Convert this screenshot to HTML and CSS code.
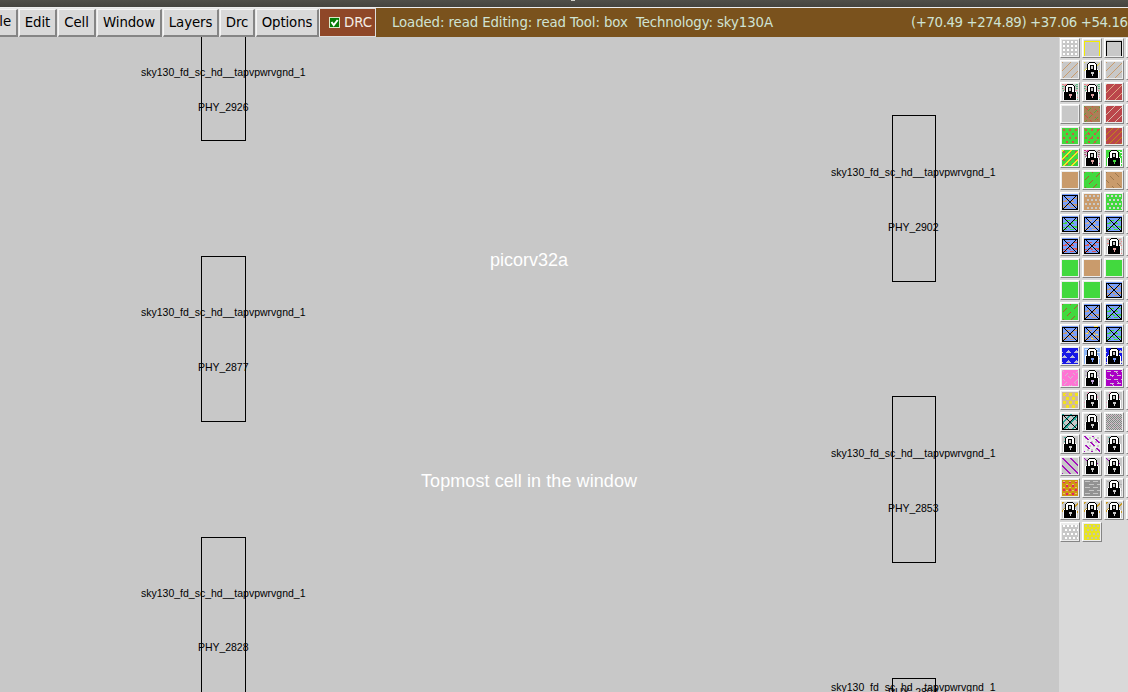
FILE: index.html
```html
<!DOCTYPE html>
<html lang="en">
<head>
<meta charset="utf-8">
<title>picorv32a</title>
<link rel="stylesheet" href="styles.css">
</head>
<body>
<div class="window">
  <div class="titlebar"><span class="title-mark"></span></div>
  <header class="toolbar">
    <nav class="menu">
      <button class="menu-item file"><span>File</span></button>
      <button class="menu-item edit">Edit</button>
      <button class="menu-item cell">Cell</button>
      <button class="menu-item win">Window</button>
      <button class="menu-item layers">Layers</button>
      <button class="menu-item drc">Drc</button>
      <button class="menu-item options">Options</button>
    </nav>
    <div class="drc-toggle">
      <svg class="check" viewBox="0 0 11 11"><rect x=".5" y=".5" width="10" height="10" fill="#067c06" stroke="#d8e8c8"/><path d="M2.5 5l2.2 3L8.7 3" fill="none" stroke="#fff" stroke-width="2"/></svg>
      <span>DRC</span>
    </div>
    <div class="status">
      <svg class="status-svg" width="752" height="29"><text x="16" y="19" textLength="381" xml:space="preserve">Loaded: read Editing: read Tool: box  Technology: sky130A</text><text x="535" y="19" textLength="217">(+70.49 +274.89) +37.06 +54.16</text></svg>
    </div>
  </header>
  <main class="workspace">
    <svg class="layout" width="1059" height="655" viewBox="0 37 1059 655">
      <g class="outline">
        <rect x="201.5" y="20.5" width="44" height="120"/>
        <rect x="201.5" y="256.5" width="44" height="165"/>
        <rect x="201.5" y="537.5" width="44" height="170"/>
        <rect x="892.5" y="115.5" width="43" height="166"/>
        <rect x="892.5" y="396.5" width="43" height="166"/>
        <rect x="892.5" y="678.5" width="43" height="166"/>
      </g>
      <g class="label">
        <text x="141" y="76" textLength="164.5">sky130_fd_sc_hd__tapvpwrvgnd_1</text>
        <text x="198" y="111" textLength="50.5">PHY_2926</text>
        <text x="141" y="316" textLength="164.5">sky130_fd_sc_hd__tapvpwrvgnd_1</text>
        <text x="198" y="371" textLength="50.5">PHY_2877</text>
        <text x="141" y="597" textLength="164.5">sky130_fd_sc_hd__tapvpwrvgnd_1</text>
        <text x="198" y="651" textLength="50.5">PHY_2828</text>
        <text x="831" y="176" textLength="164.5">sky130_fd_sc_hd__tapvpwrvgnd_1</text>
        <text x="888" y="231" textLength="50.5">PHY_2902</text>
        <text x="831" y="457" textLength="164.5">sky130_fd_sc_hd__tapvpwrvgnd_1</text>
        <text x="888" y="512" textLength="50.5">PHY_2853</text>
        <text x="831" y="691" textLength="164.5">sky130_fd_sc_hd__tapvpwrvgnd_1</text>
        <text x="888" y="696" textLength="50.5">PHY_2804</text>
      </g>
      <g class="caption">
        <text x="490" y="266" textLength="78">picorv32a</text>
        <text x="421" y="487" textLength="216">Topmost cell in the window</text>
      </g>
    </svg>
    <aside class="palette" id="palette"></aside>
  </main>
</div>
<script src="palette.js"></script>
</body>
</html>
```
FILE: styles.css
```css
* { box-sizing: border-box; }
body { margin: 0; overflow: hidden; background: #c8c8c8; font-family: "DejaVu Sans", sans-serif; }
.window { display: flex; flex-direction: column; width: 1128px; height: 692px; overflow: hidden; }
.titlebar { height: 7px; flex: none; background: linear-gradient(#504f49, #45443f); display: flex; padding-left: 571px; }
.title-mark { width: 4px; height: 1px; background: #d0cfc8; }
.toolbar { height: 30px; flex: none; display: flex; background: #d9d9d9; border-top: 1px solid #eee; }
.menu { display: flex; gap: 1px; padding-top: 1px; background: #e6e6e6; }
.menu-item { height: 28px; margin: 0; padding: 0; border: 1px solid #f5f5f5; border-right: 2px solid #858585; border-bottom: 2px solid #858585; border-radius: 0; background: #d9d9d9; color: #000; font: 13.33px/23px "DejaVu Sans", sans-serif; letter-spacing: -0.1px; white-space: nowrap; text-align: center; }
.file { width: 18px; border-left: 0; padding-right: 5px; overflow: hidden; display: flex; justify-content: flex-end; }
.edit { width: 38px; }
.cell { width: 38px; }
.win { width: 65px; }
.layers { width: 56px; }
.drc { width: 35px; }
.options { width: 63px; }
.drc-toggle { width: 57px; margin-top: 1px; height: 28px; display: flex; align-items: center; gap: 4px; padding: 0 0 0 9px; border-left: 1px solid #eee; border-right: 1px solid #ddd; border-bottom: 1px solid #ddd; background: #8f4728; color: #f4eee6; font-size: 13.33px; letter-spacing: -0.1px; }
.check { width: 11px; height: 11px; flex: none; }
.status { flex: 1; background: #7a521d; }
.status-svg { display: block; font-size: 13.33px; fill: #cfe3d4; }
.workspace { flex: 1; display: flex; min-height: 0; }
.layout { display: block; flex: none; background: #c8c8c8; }
.outline { fill: none; stroke: #000; shape-rendering: crispEdges; }
.label { font: 10.5px "Liberation Sans", Arial, sans-serif; fill: #000; }
.caption { font: 18px "Liberation Sans", Arial, sans-serif; fill: #fff; }
.palette { flex: none; width: 69px; overflow: hidden; background: #d9d9d9; padding: 1px 0 0 1px; display: grid; grid-template-columns: repeat(4, 20px); grid-auto-rows: 20px; gap: 2px; align-content: start; }
.swatch { border: 1px solid #fff; border-right-color: #858585; border-bottom-color: #858585; padding: 1px; background: #ececec; }
.swatch svg { display: block; width: 16px; height: 16px; overflow: hidden; background: #c8c8c8; shape-rendering: crispEdges; }
```
FILE: palette.js
```js
const G = '#42d93e', T = '#c99b6c', R = '#bb464b', B = '#799ffb', N = '#c8c8c8';
const rect = (x, y, w, h, c) => `<rect x="${x}" y="${y}" width="${w}" height="${h}" fill="${c}"/>`;
const fill = c => rect(0, 0, 16, 16, c);
const frame = c => rect(0, 1, 16, 1, c) + rect(0, 1, 1, 15, c) + rect(15, 1, 1, 15, c);

// Rows of small blocks, optionally shifted on alternate rows.
function dots(c, px, py, w, h, shift) {
  let s = '';
  for (let y = 1, r = 0; y < 16; y += py, r++)
    for (let x = 1 + (r % 2) * shift; x < 16; x += px) s += rect(x, y, Math.min(w, 16 - x), Math.min(h, 16 - y), c);
  return s;
}
// Pixel-stepped diagonals; dir 1 rises to the right.
function diag(c, step, dir = 1, w = 1, on = 16, off = 0) {
  let s = '';
  for (let y = 0; y < 16; y++)
    for (let x = 0; x < 16; x++) {
      const k = dir > 0 ? x + y : x - y + 64;
      if (k % step < w && (y + Math.floor(k / step) * 3) % (on + off) < on) s += rect(x, y, 1, 1, c);
    }
  return s;
}
function specks(c, n, seed) {
  let s = '', v = seed;
  for (let i = 0; i < n; i++) {
    v = (v * 73 + 41) % 257;
    s += rect(v % 16, (v * 7 >> 3) % 16, 1 + i % 2, 1, c);
  }
  return s;
}
const cross = () => {
  let s = frame('#000') + rect(0, 15, 16, 1, '#000');
  for (let i = 1; i < 15; i++) s += rect(i, i, 1, 1, '#000') + rect(15 - i, i, 1, 1, '#000');
  return s;
};
const lock = (hole = '#ccc') =>
  rect(5, 0, 6, 1, '#000') + rect(4, 1, 8, 1, '#000') + rect(3, 2, 10, 7, '#000') +
  rect(5, 1, 6, 1, '#fff') + rect(4, 2, 8, 6, '#fff') +
  rect(6, 3, 4, 1, '#000') + rect(6, 4, 4, 4, '#000') + rect(7, 4, 2, 3, N) +
  rect(2, 8, 12, 8, '#000') + rect(1, 8, 1, 8, '#fff') + rect(14, 8, 1, 8, '#fff') +
  rect(2, 7, 1, 1, '#fff') + rect(13, 7, 1, 1, '#fff') + rect(7, 10, 3, 2, hole) + rect(8, 12, 1, 2, hole);
const contact = (c, d = '') => fill(B) + dots(c, 7, 3, 4, 1, 3) + dots(c, 6, 5, 2, 1, 2) + d + cross();
const locked = (a, b, hole) => specks(a, 34, 7) + (b ? specks(b, 28, 90) : '') + lock(hole);
const lines = (c, b) => fill(b) + dots(c, 8, 3, 5, 1, 4);
// Interlocking triangles on a two-row repeat.
const triangles = (c) => {
  let s = '';
  for (const [y, off] of [[3, 0], [8, 4], [13, 0]])
    for (let x = off - 4; x < 16; x += 8) s += rect(x + 2, y - 1, 1, 1, c) + rect(x + 1, y, 3, 1, c) + rect(x, y + 1, 5, 1, c);
  return s;
};

const icons = [
  dots('#fff', 4, 4, 2, 2, 0), frame('#f3ed00'), frame('#000'),
  diag(T, 8), diag('#e4d83f', 8) + lock(), diag(T, 8),
  locked('#e88888', '#57b77c', '#dba0a0'), locked('#e88888', '#57b77c', '#dba0a0'), fill(R) + diag('#dfaa83', 8),
  '', fill('#aa8057') + diag('#d74742', 8, -1, 1, 3, 2) + diag('#58a43d', 8, 1, 1, 3, 2), fill(R) + diag('#d9bbac', 8),
  fill(G) + dots('#c65d46', 6, 4, 2, 2, 3), fill(G) + dots('#c65d46', 6, 4, 2, 2, 3) + diag('#c65d46', 8, 1, 1, 4, 3), fill(R) + diag('#c18a16', 6),
  fill(G) + dots('#c65d46', 6, 4, 2, 2, 3) + diag('#f2ea26', 8, 1, 2), locked('#cf338f', '#977', '#dba0a0'), fill(G) + specks('#fff', 18, 22) + lock(G),
  fill(T), fill(G) + diag('#af5436', 8, 1, 1, 4, 3), fill(T) + diag('#9e794f', 8, -1, 1, 4, 3),
  contact(T), fill(T) + dots(N, 4, 4, 2, 2, 2), fill(G) + dots('#d4d4d4', 4, 4, 2, 2, 2),
  contact(G), contact('#d3b08c'), contact(G),
  contact('#df5550'), contact('#df5550'), dots('#e88', 4, 2, 2, 1, 2) + lock('#e5a4a4'),
  fill(G), fill(T), fill(G),
  fill(G), fill(G), contact(T),
  fill(G) + diag('#af5436', 8, 1, 1, 4, 3), contact(T), contact(G),
  contact(T), contact(T, specks('#ffe34b', 12, 32)), contact(G),
  fill('#1717e5') + triangles('#b9b9d9'), lines('#dce8f8', '#8bb5f6') + lock(B), fill('#1717e5') + triangles(N) + lock(B),
  fill('#ff74d4') + diag('#d2bdcc', 8, 1, 1, 3, 3) + diag('#d2bdcc', 8, -1, 1, 2, 4), dots('#b5a1c9', 4, 2, 2, 1, 2) + lock('#c5a8dd'), fill('#ab00c5') + dots('#d1bfd5', 7, 4, 4, 1, 3) + diag('#d1bfd5', 8, -1, 1, 3, 4),
  fill('#d1ba9c') + dots('#f2e31d', 6, 4, 3, 3, 3) + specks('#f29bbb', 14, 3), specks('#e896b8', 22, 12) + lock(), specks('#e896b8', 22, 12) + lock(),
  diag('#25a395', 8, 1, 2) + diag('#25a395', 8, -1, 1) + cross(), specks('#b3b3b3', 22, 12) + lock(), diag('#858585', 2) + dots('#b78ca3', 4, 4, 1, 1, 2),
  specks('#45ad9b', 12, 20) + lock(), fill('#eee') + dots(N, 4, 4, 2, 2, 2) + diag('#a310bb', 8, -1, 2, 4, 2), specks('#70b8ac', 12, 20) + lock(),
  diag('#a310bb', 8, -1, 2), diag('#a310bb', 8, -1, 1, 3, 3) + lock(), diag('#a310bb', 8, -1, 1, 3, 3) + lock(),
  fill('#cf9612') + dots('#e61a70', 6, 4, 2, 2, 3) + dots('#e4c26e', 6, 3, 2, 1, 3), lines('#c6c6c6', '#929292'), lines('#b0b0b0', N) + lock(),
  diag('#c99a23', 8, 1, 2) + lock(), diag('#c99a23', 8, 1, 2) + lock(), diag('#c99a23', 8, 1, 2) + lock(),
  dots('#fff', 4, 4, 2, 2, 2) + rect(0, 0, 16, 1, '#eee'), fill('#e8e421') + dots('#c7c7a3', 4, 4, 2, 2, 2)
];
const palette = document.getElementById('palette');
icons.forEach((icon, i) => {
  palette.insertAdjacentHTML('beforeend', `<div class="swatch"><svg viewBox="0 0 16 16">${icon}</svg></div>`);
  if (i % 3 === 2) palette.insertAdjacentHTML('beforeend', '<div class="swatch"></div>');
});
```
